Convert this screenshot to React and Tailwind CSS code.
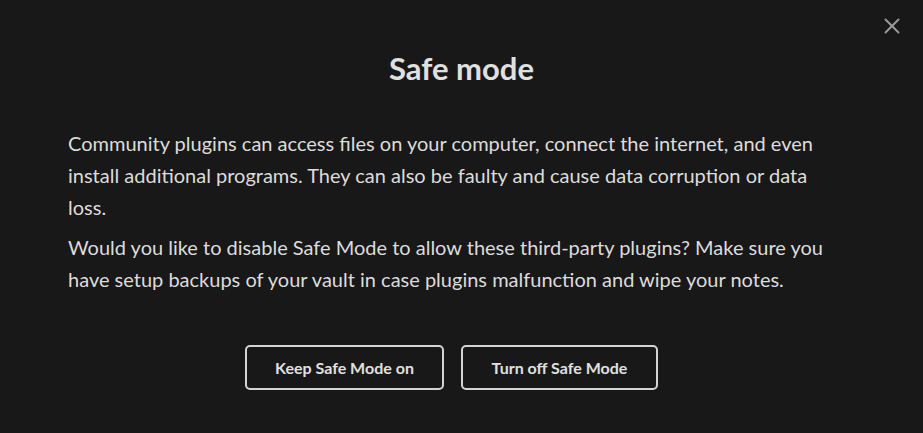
import React from 'react';
import { X } from 'lucide-react';

const App = () => {
  return (
    <div
      className="relative w-[923px] h-[433px] bg-[#181818] text-[#dcdcdc] overflow-hidden"
      style={{ fontFamily: 'Lato, "Open Sans", sans-serif' }}
    >
      <button className="absolute right-[18px] top-[13px] text-[#9a9a9a]">
        <X size={26} strokeWidth={1.8} />
      </button>

      <div className="flex flex-col px-[68px] pt-[48px]">
        <h1 className="text-center text-[31px] font-bold leading-[40px] text-[#e0e0e0]">Safe mode</h1>

        <div className="mt-[39px] max-w-[765px] text-[20px] leading-[32px]">
          <p>
            Community plugins can access files on your computer, connect the internet, and even install additional
            programs. They can also be faulty and cause data corruption or data loss.
          </p>
          <p className="mt-[8px]">
            Would you like to disable Safe Mode to allow these third-party plugins? Make sure you have setup backups of
            your vault in case plugins malfunction and wipe your notes.
          </p>
        </div>

        <div className="mt-[50px] mr-[20px] flex justify-center gap-[17px]">
          <button className="w-[199px] h-[45px] rounded-[5px] border-2 border-[#d4d4d4] text-[16px] font-bold text-[#e0e0e0]">
            Keep Safe Mode on
          </button>
          <button className="w-[197px] h-[45px] rounded-[5px] border-2 border-[#d4d4d4] text-[16px] font-bold text-[#e0e0e0]">
            Turn off Safe Mode
          </button>
        </div>
      </div>
    </div>
  );
};

export default App;
